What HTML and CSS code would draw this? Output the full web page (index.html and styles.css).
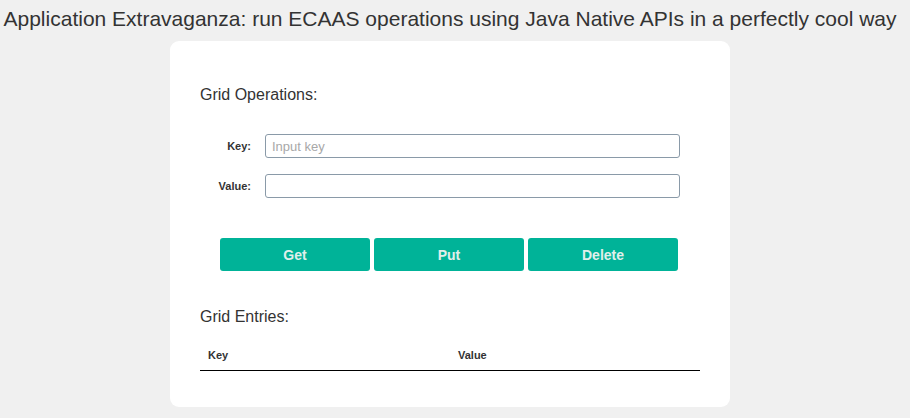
FILE: index.html
```html
<!DOCTYPE html>
<html>
<head>
<meta charset="utf-8">
<link rel="stylesheet" href="styles.css">
</head>
<body>
<div class="page">
<h1 class="title">Application Extravaganza: run ECAAS operations using Java Native APIs in a perfectly cool way</h1>
<div class="card">
  <h2 class="section">Grid Operations:</h2>
  <div class="form">
    <label class="label" for="k">Key:</label>
    <input class="input" id="k" type="text" placeholder="Input key">
    <label class="label" for="v">Value:</label>
    <input class="input" id="v" type="text">
  </div>
  <div class="buttons">
    <button class="btn">Get</button>
    <button class="btn">Put</button>
    <button class="btn">Delete</button>
  </div>
  <h2 class="section entries">Grid Entries:</h2>
  <table class="table">
    <thead>
      <tr><th class="col-key">Key</th><th>Value</th></tr>
    </thead>
  </table>
</div>
</div>
</body>
</html>
```
FILE: styles.css
```css
html, body {
  margin: 0;
  padding: 0;
  background: #f0f0f0;
  font-family: "Liberation Sans", Arial, sans-serif;
  color: #333;
}
.page {
  width: 900px;
}
.title {
  margin: 0;
  padding-top: 7px;
  font-size: 21px;
  font-weight: normal;
  text-align: center;
  line-height: 24px;
  color: #333;
}
.card {
  width: 560px;
  box-sizing: border-box;
  margin: 10px auto 0;
  background: #fff;
  border-radius: 9px;
  padding: 44px 30px 36px 30px;
}
.section {
  margin: 0;
  font-size: 16px;
  font-weight: normal;
  line-height: 20px;
  color: #333;
}
.form {
  display: grid;
  grid-template-columns: 51px 415px;
  column-gap: 14px;
  row-gap: 16px;
  align-items: center;
  margin-top: 29px;
}
.label {
  font-size: 11px;
  font-weight: bold;
  text-align: right;
  color: #333;
}
.input {
  box-sizing: border-box;
  height: 24px;
  margin: 0;
  border: 1px solid #8a9aa8;
  border-radius: 3px;
  padding: 0 6px;
  font-family: "Liberation Sans", Arial, sans-serif;
  font-size: 13px;
  color: #333;
}
.input::placeholder {
  color: #a8a8a8;
}
.buttons {
  display: flex;
  gap: 4px;
  margin: 40px 0 0 20px;
}
.btn {
  width: 150px;
  height: 33px;
  border: none;
  border-radius: 3px;
  background: #00b398;
  color: #e0efeb;
  font-family: "Liberation Sans", Arial, sans-serif;
  font-size: 14px;
  font-weight: bold;
}
.entries {
  margin-top: 36px;
}
.table {
  width: 500px;
  border-collapse: collapse;
  margin-top: 16px;
}
.table th {
  text-align: left;
  font-size: 11px;
  font-weight: bold;
  padding: 6px 8px 9px;
  border-bottom: 1px solid #000;
  color: #333;
}
.table .col-key {
  width: 234px;
}
```
